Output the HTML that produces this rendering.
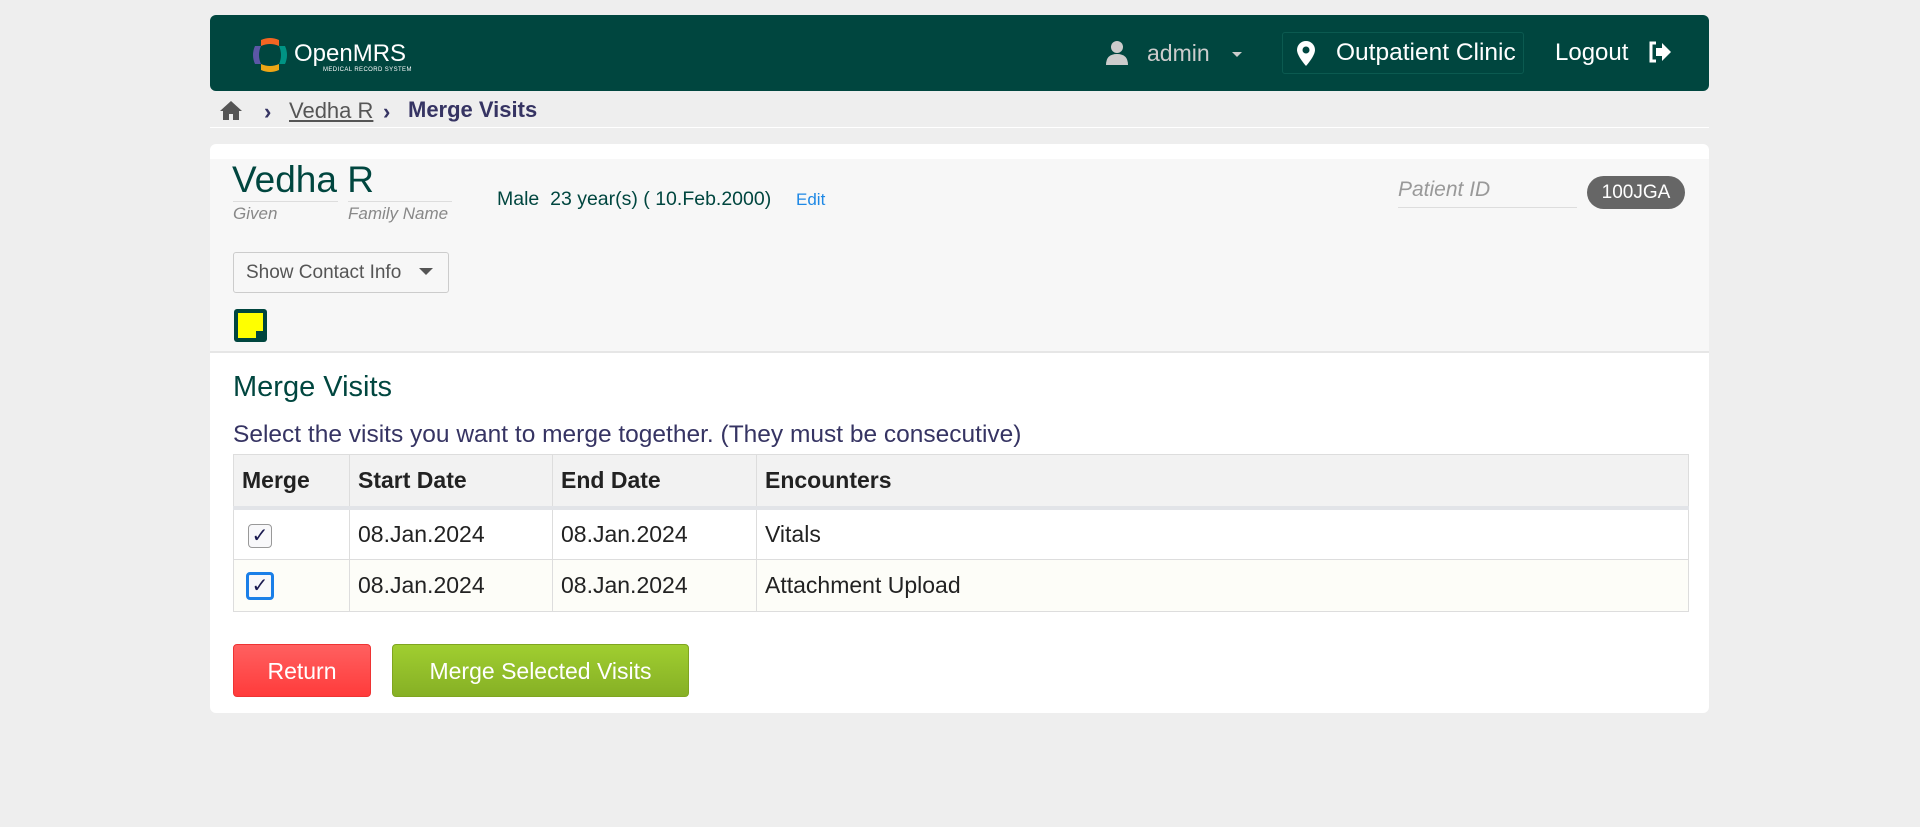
<!DOCTYPE html>
<html><head><meta charset="utf-8"><style>
*{box-sizing:border-box;margin:0;padding:0}
body{width:1920px;height:827px;background:#eeeeee;font-family:"Liberation Sans",sans-serif;position:relative;overflow:hidden;color:#363463}
.a{position:absolute;white-space:nowrap}
#hdr{left:210px;top:15px;width:1499px;height:76px;background:#00463f;border-radius:6px}
#card{left:210px;top:144px;width:1499px;height:569px;background:#fff;border-radius:6px}
#pat{left:210px;top:159px;width:1499px;height:194px;background:#f7f7f7;border-bottom:2px solid #e6e6e6}
table{position:absolute;left:233px;top:454px;width:1456px;border-collapse:collapse;font-size:23px;color:#222}
td,th{border:1px solid #ddd;text-align:left;padding:0 8px}
th{background:#f2f2f2;height:53px;border-bottom:4px solid #e2e4e8}
td{height:52px}
.cb{display:inline-block;width:24px;height:24px;border:1px solid #999;border-radius:4px;background:#f8f8fa;text-align:center;line-height:22px;font-size:20px;color:#1a1a50;margin-left:6px}
.btn{top:644px;height:53px;border-radius:4px;color:#fff;font-size:23px;text-align:center;line-height:53px}
</style></head><body>
<div class="a" id="hdr"></div>
<svg class="a" style="left:249px;top:34px" width="42" height="42" viewBox="0 0 42 42">
<path d="M12 6 Q21 2 30 6 L30 12 Q21 8 12 12Z" fill="#f26522"/>
<path d="M6 12 Q2 21 6 30 L12 30 Q8 21 12 12Z" fill="#5b57a6"/>
<path d="M36 12 Q40 21 36 30 L30 30 Q34 21 30 12Z" fill="#009384"/>
<path d="M12 36 Q21 40 30 36 L30 30 Q21 34 12 30Z" fill="#eea616"/>
</svg>
<div class="a" style="left:294px;top:40px;font-size:24px;color:#fff">OpenMRS</div>
<div class="a" style="left:323px;top:67px;font-size:6px;color:#fff;letter-spacing:0.4px">MEDICAL RECORD SYSTEM</div>
<svg class="a" style="left:1105px;top:40px" width="24" height="26" viewBox="0 0 24 26"><circle cx="12" cy="7" r="6" fill="#ccc"/><path d="M1 25 Q1 14 12 14 Q23 14 23 25Z" fill="#ccc"/></svg>
<div class="a" style="left:1147px;top:40px;font-size:23px;color:#ccc">admin</div>
<div class="a" style="left:1232px;top:52px;width:0;height:0;border-left:5px solid transparent;border-right:5px solid transparent;border-top:5px solid #ccc"></div>
<div class="a" style="left:1282px;top:32px;width:242px;height:42px;border:1px solid #0b5a50;border-radius:3px"></div>
<svg class="a" style="left:1297px;top:41px" width="18" height="25" viewBox="0 0 18 25"><path d="M9 0 A9 9 0 0 1 18 9 C18 15 9 25 9 25 C9 25 0 15 0 9 A9 9 0 0 1 9 0Z" fill="#fff"/><circle cx="9" cy="9" r="3.5" fill="#00463f"/></svg>
<div class="a" style="left:1336px;top:39px;font-size:24.5px;color:#fff">Outpatient Clinic</div>
<div class="a" style="left:1555px;top:39px;font-size:24px;color:#fff">Logout</div>
<svg class="a" style="left:1648px;top:41px" width="24" height="22" viewBox="0 0 24 22"><path d="M8 2 H3 V20 H8" fill="none" stroke="#fff" stroke-width="3"/><path d="M8 7 H14 V2 L23 11 L14 20 V15 H8Z" fill="#fff"/></svg>
<svg class="a" style="left:219px;top:100px" width="24" height="20" viewBox="0 0 24 20"><path d="M12 1 L1 11 L4 11 L4 20 L10 20 L10 14 L14 14 L14 20 L20 20 L20 11 L23 11Z" fill="#555"/></svg>
<div class="a" style="left:264px;top:99px;font-size:22px;color:#363463;font-weight:bold">›</div>
<div class="a" style="left:289px;top:98px;font-size:22px;color:#555;text-decoration:underline">Vedha R </div>
<div class="a" style="left:383px;top:99px;font-size:22px;color:#363463;font-weight:bold">›</div>
<div class="a" style="left:408px;top:97px;font-size:22px;color:#363463;font-weight:bold">Merge Visits</div>
<div class="a" style="left:210px;top:127px;width:1499px;height:1px;background:#fff"></div>
<div class="a" id="card"></div>
<div class="a" id="pat"></div>
<div class="a" style="left:232px;top:159px;font-size:37px;color:#00463f">Vedha R</div>
<div class="a" style="left:233px;top:201px;width:105px;height:1px;background:#ddd"></div>
<div class="a" style="left:348px;top:201px;width:104px;height:1px;background:#ddd"></div>
<div class="a" style="left:233px;top:204px;font-size:17px;color:#888;font-style:italic">Given</div>
<div class="a" style="left:348px;top:204px;font-size:17px;color:#888;font-style:italic">Family Name</div>
<div class="a" style="left:497px;top:188px;font-size:19.5px;color:#00463f">Male&nbsp; 23 year(s) ( 10.Feb.2000)</div>
<div class="a" style="left:796px;top:190px;font-size:17px;color:#1e88e5">Edit</div>
<div class="a" style="left:1398px;top:178px;font-size:21px;color:#999;font-style:italic">Patient ID</div>
<div class="a" style="left:1398px;top:207px;width:179px;height:1px;background:#ddd"></div>
<div class="a" style="left:1587px;top:176px;width:98px;height:33px;border-radius:17px;background:#666;color:#fff;font-size:19px;text-align:center;line-height:33px">100JGA</div>
<div class="a" style="left:233px;top:252px;width:216px;height:41px;border:1px solid #ccc;border-radius:3px;background:#f7f7f7;font-size:19px;color:#555;line-height:39px;padding-left:12px">Show Contact Info</div>
<div class="a" style="left:419px;top:268px;width:0;height:0;border-left:7px solid transparent;border-right:7px solid transparent;border-top:7px solid #555"></div>
<div class="a" style="left:234px;top:309px;width:33px;height:33px;background:#00463f;border-radius:3px"></div>
<div class="a" style="left:238px;top:313px;width:25px;height:25px;background:#ffff00"></div>
<div class="a" style="left:256px;top:331px;width:7px;height:7px;background:#00463f"></div>
<div class="a" style="left:233px;top:371px;font-size:29px;color:#00463f">Merge Visits</div>
<div class="a" style="left:233px;top:421px;font-size:24.5px;color:#363463">Select the visits you want to merge together. (They must be consecutive)</div>
<table>
<tr><th style="width:116px">Merge</th><th style="width:203px">Start Date</th><th style="width:204px">End Date</th><th>Encounters</th></tr>
<tr><td><span class="cb">✓</span></td><td>08.Jan.2024</td><td>08.Jan.2024</td><td>Vitals</td></tr>
<tr style="background:#fdfdf8"><td><span class="cb" style="border:3px solid #1a7fe8;width:28px;height:28px;margin-left:4px">✓</span></td><td>08.Jan.2024</td><td>08.Jan.2024</td><td>Attachment Upload</td></tr>
</table>
<div class="a btn" style="left:233px;width:138px;background:linear-gradient(#ff6060,#ff3b3b);border:1px solid #e33">Return</div>
<div class="a btn" style="left:392px;width:297px;background:linear-gradient(#a0ce30,#86b025);border:1px solid #7fa520">Merge Selected Visits</div>
</body></html>
